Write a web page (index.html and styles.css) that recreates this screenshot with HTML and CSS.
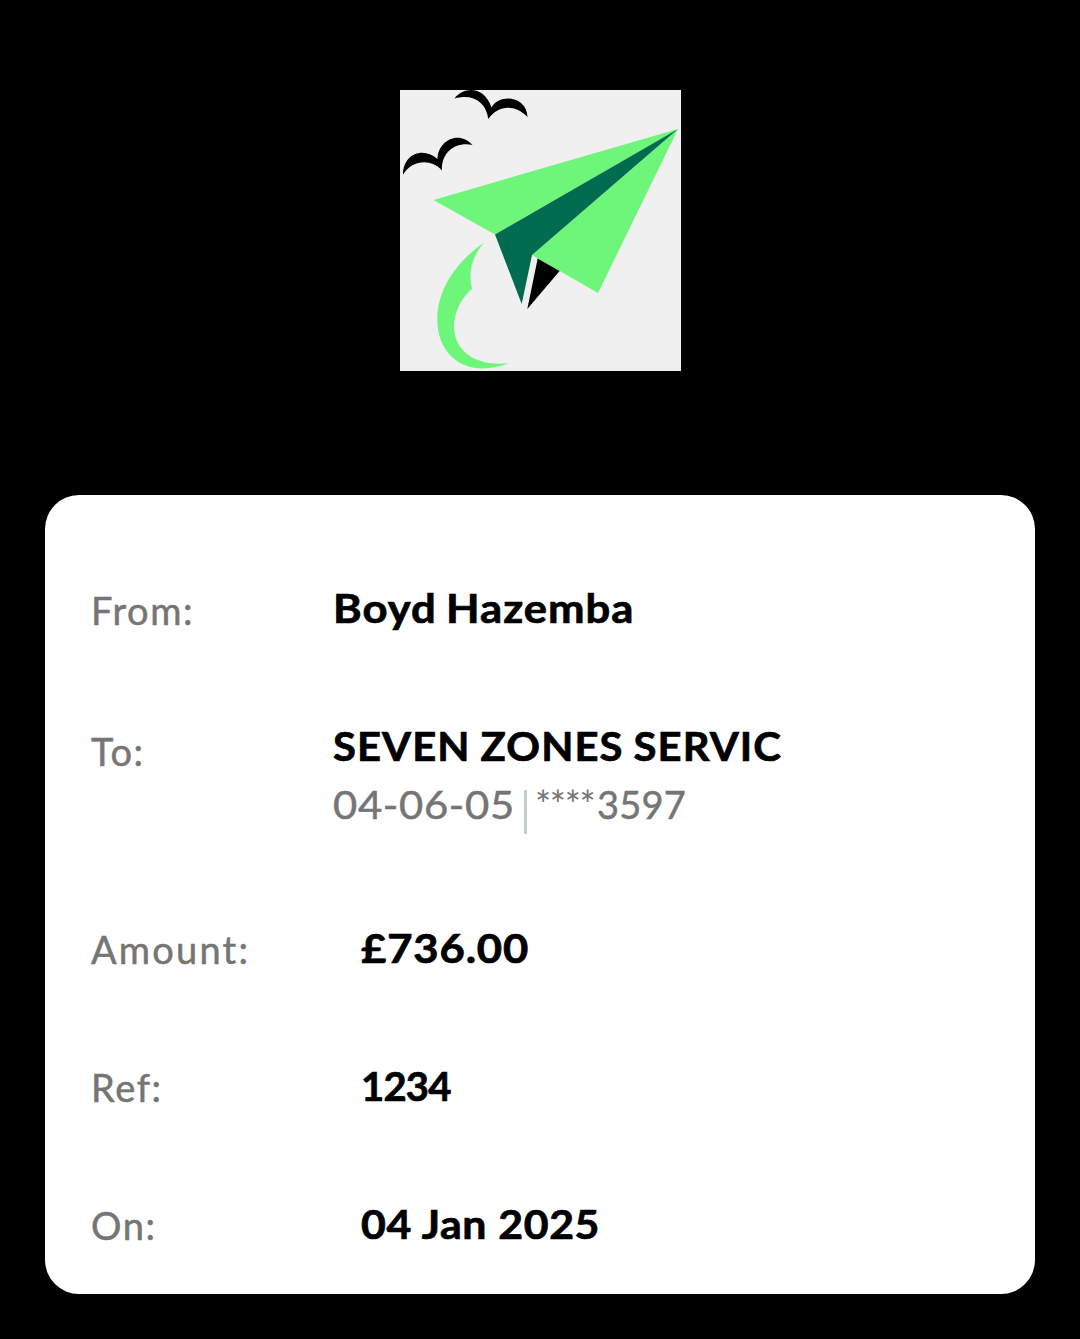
FILE: index.html
```html
<!DOCTYPE html>
<html lang="en">
<head>
<meta charset="utf-8">
<title>Payment details</title>
<link rel="stylesheet" href="styles.css">
</head>
<body>
<main class="screen">
  <svg class="logo" viewBox="0 0 281 281" role="img" aria-label="Paper plane">
    <rect width="281" height="281" fill="#f0f0f0"/>
    <path d="M54.500 8.500C63-3 84-5 91.500 17.500C97 7 113 6 121 13Q127 18 127.500 27C115 14.500 99 14.500 88.300 29C86 11 72 3.500 54.500 8.500Z"/>
    <path d="M3 84.500C3 64 23 56 37.500 69C38 50 59 40 72.500 55C56 51.500 41 62 42 80.500C31 68 12 70 3 84.500Z"/>
    <path fill="#6df67a" d="M278 39 33.500 110 95 144.500ZM278 39 132 165 198 203Z"/>
    <path fill="#006b4e" d="M278 39 95 144.500 121.700 214 132 165Z"/>
    <path d="M137.700 168.500 159.600 181 127.300 219Z"/>
    <path fill="#6df67a" d="M84 152.500C56 172 37.300 200 37.300 229C37.300 267 67 289 109 273.300C71 277 54 257 54 237C54 222 61 209 72 198.500C68 185 71 168 84 152.500Z"/>
  </svg>
  <dl class="card">
    <div class="row row-from"><dt>From:</dt><dd><span class="value name">Boyd Hazemba</span></dd></div>
    <div class="row row-to">
      <dt>To:</dt>
      <dd><span class="value payee">SEVEN ZONES SERVIC</span>
        <div class="account"><span class="sort-code">04-06-05</span><span class="divider"></span><span class="mask">****</span><span class="digits">3597</span></div>
      </dd>
    </div>
    <div class="row row-amount"><dt>Amount:</dt><dd><span class="value amount">£736.00</span></dd></div>
    <div class="row row-ref"><dt>Ref:</dt><dd><span class="value ref">1234</span></dd></div>
    <div class="row row-date"><dt>On:</dt><dd><span class="value date">04 Jan 2025</span></dd></div>
  </dl>
</main>
</body>
</html>
```
FILE: styles.css
```css
body {
  margin: 0;
  background: #000;
  font-family: Lato, "Open Sans", sans-serif;
}
.screen {
  box-sizing: border-box;
  height: 1339px;
  padding: 90px 45px 45px;
  display: flex;
  flex-direction: column;
  align-items: center;
}
.logo {
  flex: none;
  width: 281px;
  height: 281px;
}
.card {
  box-sizing: border-box;
  width: 990px;
  height: 799px;
  margin: 124px 0 0;
  padding: 89px 45px 0 46px;
  border-radius: 34px;
  background: #fff;
}
.row {
  display: grid;
  grid-template-columns: 270px 1fr;
  height: 138px;
  white-space: nowrap;
}
.row-from,
.row-to { grid-template-columns: 242px 1fr; }
.row-to { height: 202px; }
dt {
  padding-top: 1px;
  color: #757575;
  font-size: 38px;
  line-height: 48px;
  letter-spacing: 1.6px;
  -webkit-text-stroke: 0.5px #757575;
}
dd {
  margin: 0;
  color: #000;
  font-size: 40px;
  font-weight: 700;
  line-height: 48px;
}
.row-from dt { padding-top: 2px; }
.row-to dt { padding-top: 5px; }
.row-amount dt { letter-spacing: 2.2px; }
.value {
  display: block;
  width: max-content;
  transform-origin: left;
  -webkit-text-stroke: 0.7px #000;
}
/* The values are set slightly extended. */
.name {
  letter-spacing: 0.9px;
  word-spacing: -2px;
  transform: scaleX(1.09);
}
.payee {
  letter-spacing: 1px;
  word-spacing: -1px;
  transform: scaleX(1.045);
}
.amount {
  letter-spacing: 0.8px;
  transform: scaleX(1.09);
}
.ref { letter-spacing: -0.8px; }
.date {
  letter-spacing: 0.6px;
  transform: scaleX(1.07);
}
.account {
  display: flex;
  margin-top: 10px;
  color: #757575;
  font-size: 38px;
  font-weight: 400;
  -webkit-text-stroke: 0.5px #757575;
}
.sort-code {
  width: 191px;
  letter-spacing: 0.6px;
  transform: scaleX(1.1);
  transform-origin: left;
}
.divider {
  width: 3px;
  height: 44px;
  margin: 10px 8px 0 0;
  background: #c5cdd1;
}
.mask {
  width: 62px;
  letter-spacing: -1.3px;
  -webkit-text-stroke: 0;
}
.digits { letter-spacing: 0.2px; }
```
